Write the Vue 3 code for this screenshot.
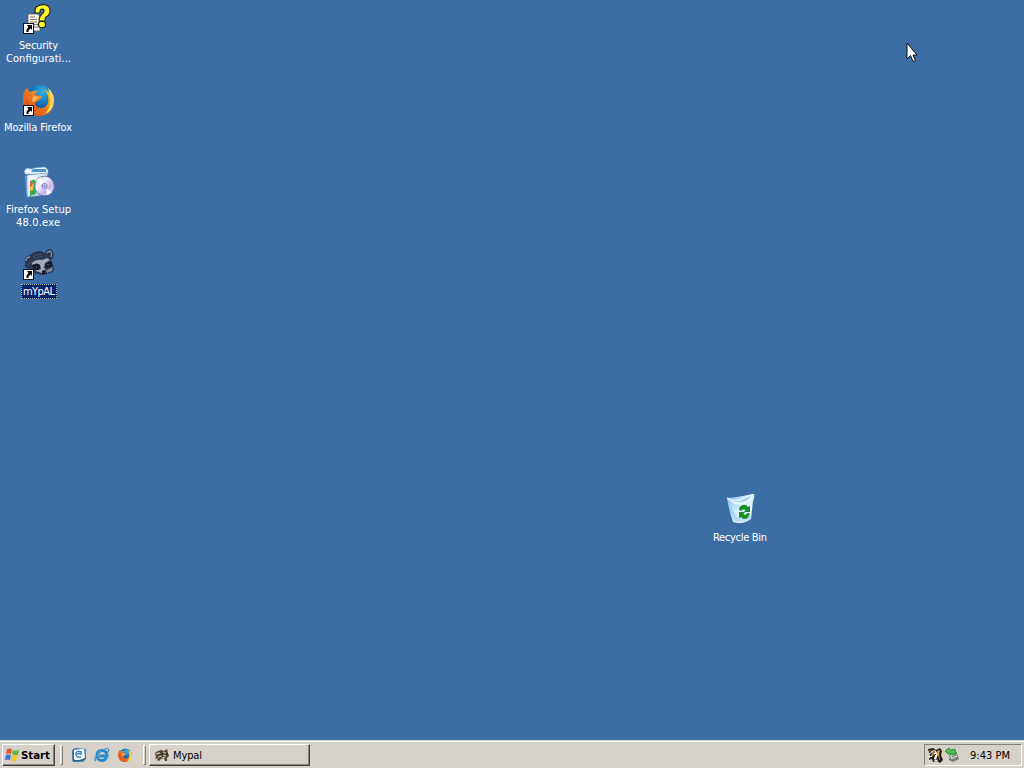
<script setup>
const shortcuts = [
  { id: 'security', x: 23, y: 2, link: true, lines: [{ t: 'Security', w: 39 }, { t: 'Configurati...', w: 65 }] },
  { id: 'firefox', x: 23, y: 84, link: true, lines: [{ t: 'Mozilla Firefox', w: 68 }] },
  { id: 'setup', x: 23, y: 166, link: false, lines: [{ t: 'Firefox Setup', w: 65 }, { t: '48.0.exe', w: 44 }] },
  { id: 'mypal', x: 23, y: 248, link: true, selected: true, lines: [{ t: 'mYpAL', w: 32 }] },
  { id: 'recycle', x: 725, y: 494, link: false, lines: [{ t: 'Recycle Bin', w: 54 }] },
]
</script>

<template>
  <div class="screen">
    <svg class="defs" width="0" height="0" aria-hidden="true">
      <defs>
        <radialGradient id="globe" cx=".6" cy=".25" r=".75">
          <stop offset="0" stop-color="#35b5e4" /><stop offset=".5" stop-color="#1677bd" /><stop offset="1" stop-color="#153d7c" />
        </radialGradient>
        <linearGradient id="fire" x1="0" y1="1" x2="1" y2="0">
          <stop offset="0" stop-color="#d5421c" /><stop offset=".5" stop-color="#e8761f" /><stop offset="1" stop-color="#ffd83c" />
        </linearGradient>
        <linearGradient id="box" x1="0" y1="0" x2="1" y2="1">
          <stop offset="0" stop-color="#ffffff" /><stop offset="1" stop-color="#a3c8ee" />
        </linearGradient>
        <linearGradient id="disc" x1="0" y1="0" x2="1" y2="1">
          <stop offset="0" stop-color="#b7bddf" /><stop offset=".35" stop-color="#f7f4ff" /><stop offset=".65" stop-color="#c6b5e8" /><stop offset="1" stop-color="#f0f0fa" />
        </linearGradient>
        <linearGradient id="bin" x1="0" y1="0" x2="1" y2="1">
          <stop offset="0" stop-color="#74b8ef" /><stop offset=".45" stop-color="#cfeafb" /><stop offset=".75" stop-color="#f4fcff" /><stop offset="1" stop-color="#9dccf0" />
        </linearGradient>
        <symbol id="fox" viewBox="0 0 32 32">
          <circle cx="17" cy="15" r="14" fill="url(#globe)" />
          <path d="M3 4l4 4q4-2 8-1-3 2-3 4l6 1q2 1-2 4l-4 3q0 4 5 5 4 1 7-3 2-3 1-9-1-4-4-7 8 4 9 12 1 10-8 14-9 3-16-2-7-6-6-15 0-6 3-9z" fill="url(#fire)" />
          <path d="M11 12l5 1-4 4-2 1q-2-3 1-6z" fill="#f6b264" />
          <path d="M25 4q7 6 6 14-1 9-9 12 5-6 5-13 0-7-2-13z" fill="#ffd553" />
          <path d="M4 14q0 10 10 13-8-1-11-8z" fill="#dd4b1e" />
        </symbol>
        <symbol id="arrow" viewBox="0 0 11 11">
          <path d="M0 0h11v11H0z" fill="#111" /><path d="M1 1h9v9H1z" fill="#fff" />
          <path d="M4 2h5v5L7.500 5.500 5.500 7.500V9H3.500V6.500L5.500 4z" fill="#000" />
        </symbol>
      </defs>
    </svg>

    <main class="desktop">
      <div v-for="s in shortcuts" :key="s.id" class="shortcut" :style="{ left: s.x - 23 + 'px', top: s.y + 'px' }">
        <svg class="icon" viewBox="0 0 32 32">
          <template v-if="s.id === 'security'">
            <path d="M5 12h10l2 3v14H5z" fill="#f4f1e8" stroke="#555" stroke-width=".7" />
            <path d="M7 15h5M7 17.500h7M7 20h7M10 22.500h5M11 25h4" stroke="#807870" />
            <path d="M12 11V8q0-3 3-4 4-2 8-1 4 1 4 6 0 4-4 6-1 1-1 4h-6q0-4 2-6 3-2 3-4 0-2-2-2-2 0-2 4z" fill="#fff52a" stroke="#25251c" stroke-width="1.200" />
            <path d="M17 19.500h4l1.500 1.500v3L21 25.500h-4L15.500 24v-3z" fill="#fff52a" stroke="#25251c" stroke-width="1.200" />
          </template>
          <use v-else-if="s.id === 'firefox'" href="#fox" />
          <template v-else-if="s.id === 'setup'">
            <path d="M2 8L1 5l3-3 5 1 2-1 11-1 3 3v5z" fill="#eef5fd" stroke="#6c9bcc" stroke-width=".6" />
            <path d="M10 3h13v3H8z" fill="#4c92da" />
            <path d="M2 9l3 2v19l-2-2z" fill="#6ba1dc" />
            <path d="M4 9l20-2v22L4 31z" fill="url(#box)" stroke="#638db8" stroke-width=".7" />
            <path d="M7 15q4-2 5-1l1 14-6 2z" fill="#3aad4b" />
            <path d="M7 15l4 3-1 6-3 1z" fill="#f1bd50" />
            <path d="M7 15l3 2-1 3-2 1z" fill="#d7604c" />
            <circle cx="21.500" cy="20" r="9.800" fill="url(#disc)" stroke="#666c9e" stroke-width=".9" />
            <path d="M20 19L13 15q2-3 5-4zM23 22l6 4q-2 3-5 3z" fill="#fff" opacity=".8" />
            <circle cx="21.500" cy="20" r="2.500" fill="#d7d3ee" stroke="#8379b9" />
            <circle cx="21.500" cy="20" r="1" fill="#6387b5" />
          </template>
          <template v-else-if="s.id === 'mypal'">
            <path d="M2 14q-1-6 5-7 4-4 11-4l4 2q1-4 6-4 4 3 2 9l-2 2q3 5 3 9 0 3-4 4l-6 2-8-1-5-4-6-3z" fill="#2b3550" />
            <path d="M3 13q0-4 4-4M24 5q3-3 4-1 1 2 0 5" stroke="#8790a6" stroke-width="1.300" fill="none" />
            <path d="M10 9q4-3 8-3M11 11l8-3M4 17l6-4" stroke="#46516d" stroke-width="1" fill="none" />
            <path d="M9 15q4-4 10-3l5-2 3 2-5 3-1 5 3 3-3 3-5-2-4-1 6-2-1-4q-4-2-8 1z" fill="#a2a8b8" />
            <path d="M9 17q5-3 8 0l0 4-6 1zM22 16l6-3 1 5-6 2z" fill="#141a2d" />
            <path d="M24 22l6-3-1 4-5 2z" fill="#838a9e" />
            <path d="M19 23q3-2 4 0l-1 3h-3z" fill="#101625" />
            <circle cx="13.500" cy="19" r=".6" fill="#7d879e" /><circle cx="25" cy="16.500" r=".6" fill="#7d879e" />
          </template>
          <template v-else>
            <path d="M2 4q12-1 20-3l7-1q1 4-1 7l-2 18q-8 6-18 3Q4 16 2 4z" fill="url(#bin)" />
            <path d="M2 4l5 3q9 1 15-3l7-4q0 6-9 10Q9 13 2 4z" fill="#e7f7ff" />
            <path d="M5 6q9 2 15-2l7-3q-4 6-10 7Q9 9 5 6z" fill="#a5d5f4" />
            <path d="M4 9q2 12 5 18 8 2 16-2l1-4q-8 4-14 2Q8 17 4 9z" fill="#8bc4ef" opacity=".55" />
            <path d="M2 4q9 5 17 0l10-4" fill="none" stroke="#fff" />
            <path d="M14 16q0-4 4-5 3-1 5 2l2-1v6h-6l1.500-2q-3-2-4 1zM25 19q-1 5-5 6-3 0-4-2l-2 1v-6h6l-1.500 2q2 2 4-1z" fill="#168f25" />
          </template>
          <use v-if="s.link" href="#arrow" x="0" y="21" width="11" height="11" />
        </svg>
        <div class="label" :class="{ selected: s.selected }">
          <svg v-for="l in s.lines" :key="l.t" class="line" :width="l.w" height="13">
            <text x="0" y="10" :textLength="l.w" lengthAdjust="spacing">{{ l.t }}</text>
          </svg>
        </div>
      </div>

      <svg class="cursor" viewBox="0 0 13 21">
        <path d="M1 1v16l3.500-3.500 2.500 6 2.500-1-2.500-5.500H11z" fill="#fff" stroke="#111" />
      </svg>
    </main>

    <footer class="taskbar">
      <button class="start">
        <svg viewBox="0 0 16 16" width="16" height="16">
          <path d="M3 2q3-1 5 0L7 7Q5 6 2 7z" fill="#e5532b" /><path d="M9 3q3 1 6 0l-1 5q-3 1-6-1z" fill="#65b53b" />
          <path d="M2 8q2-1 5 0l-1 5q-2-1-5 0z" fill="#3974d8" /><path d="M8 8q3 1 6 0l-2 6q-3 1-5-1z" fill="#f2c52d" />
        </svg>
        <svg width="30" height="14"><text x="0" y="11" textLength="29" lengthAdjust="spacingAndGlyphs">Start</text></svg>
      </button>
      <i class="grip first"></i>
      <nav class="quick">
        <svg viewBox="0 0 16 16">
          <path d="M1 3l3-2 11 1v10l-3 3H2z" fill="#3e82b2" /><path d="M3 3l10-1 1 9-8 3-3-2z" fill="#f8fcff" />
          <path d="M11 5Q5 3 5 7q0 4 5 3M6 7l4-1v2" fill="none" stroke="#2a7ac0" stroke-width="1.300" />
          <path d="M2 4v10l10-1 2-2" fill="none" stroke="#295775" />
        </svg>
        <svg viewBox="0 0 16 16">
          <path d="M12.500 10.500Q11 13.500 8 13.500 3 13.500 3 8.500T8 3.500q5 0 5 5.500H5" fill="none" stroke="#258bd3" stroke-width="2.800" />
          <path d="M4 7q1-3 4-3" fill="none" stroke="#8fd6f7" />
          <path d="M2 14Q-1 12 5 6q7-6 9-4 2 1-1 4" fill="none" stroke="#3d8fbd" stroke-width="1.200" />
        </svg>
        <svg viewBox="0 0 16 16"><use href="#fox" x="1" y="1" width="14" height="14" /></svg>
      </nav>
      <i class="grip second"></i>
      <button class="task">
        <svg viewBox="0 0 16 16" width="16" height="16">
          <path d="M1 6l3-2 3-1 3 1 3-2 1 4 1 3-2 2v3h-2l-1-3-3 1-2 2-2-1 1-2-3 1 1-2z" fill="#51462f" />
          <path d="M2 7l3-1 2 1M9 5l3 1M9 8l3 1M4 10l4-1M8 11l3-1" stroke="#d3c6a6" fill="none" stroke-width="1.200" />
          <path d="M6 7h3M12 7h2M8 9h1" stroke="#181510" stroke-width="1.200" />
        </svg>
        <svg width="31" height="14"><text x="0" y="11" textLength="29" lengthAdjust="spacing">Mypal</text></svg>
      </button>
      <div class="tray">
        <svg viewBox="0 0 16 16" width="16" height="16">
          <path d="M1 2l5-1 3 2 4-2 2 3-1 4 2 5-3 3-3-2-4 1-1-3-3 1 1-4z" fill="#271c16" />
          <path d="M4 4l4-1 3 4-2 6-2-1 1-4z" fill="#f4eee3" />
          <path d="M10 4l3-1-1 4 1 6-2-1zM5 6l2 2-3 2zM3 3l1 1-2 1z" fill="#ee9a39" />
          <path d="M2 7l3-2M2 10l3-1M7 14l4-1" stroke="#fff" stroke-width="1" />
          <path d="M6 5h2M9 7l-2 2M11 9l1 5" stroke="#171310" />
        </svg>
        <svg viewBox="0 0 16 16" width="16" height="16">
          <path d="M5 7l7-2 2 5-7 3z" fill="#cbd3c6" stroke="#5f6d60" stroke-width=".8" />
          <path d="M5 11l3 2 6-3 1 2-6 3-4-2z" fill="#727e76" /><path d="M8 10l4-2" stroke="#59705a" />
          <path d="M1 4l4-3 1 2 5-1 1 5-5 1-1-2-2 1z" fill="#4abf4e" stroke="#258135" stroke-width=".8" />
        </svg>
        <svg class="clock" width="42" height="14"><text x="0" y="11" textLength="40" lengthAdjust="spacing">9:43 PM</text></svg>
      </div>
    </footer>
  </div>
</template>

<style>
body { margin: 0; overflow: hidden; background: #3c6ea5; }
</style>

<style scoped>
.screen {
  width: 1024px; height: 768px; display: flex; flex-direction: column; overflow: hidden;
  font: 11px "DejaVu Sans Condensed", "DejaVu Sans", sans-serif; cursor: default;
}
.defs { position: absolute; }
.desktop { position: relative; flex: 1; background: #3c6ea5; }
.shortcut { position: absolute; width: 76px; display: flex; flex-direction: column; align-items: center; gap: 4px; }
.icon { width: 32px; height: 32px; display: block; margin-left: 2px; }
.label { display: flex; flex-direction: column; align-items: center; border: 1px solid transparent; padding: 0 1px; }
.label.selected { background: #0a246a; border: 1px dotted #b3b9a8; margin-left: 2px; }
.line { display: block; overflow: visible; }
.line text { fill: #fff; }
.cursor { position: absolute; left: 906px; top: 42px; width: 13px; height: 21px; }
.taskbar {
  box-sizing: border-box; height: 28px; display: flex; align-items: center; padding: 2px;
  background: #d6d2ca; border-top: 1px solid #d6d2ca; box-shadow: inset 0 1px #fff;
}
button {
  box-sizing: border-box; height: 22px; margin: 0; padding: 0; display: flex; align-items: center;
  font: inherit; background: #d6d2ca; border: 1px solid; border-color: #fff #404040 #404040 #fff;
  box-shadow: inset -1px -1px #85817a;
}
.start { width: 53px; gap: 1px; padding-left: 1px; font-family: "DejaVu Sans", sans-serif; font-weight: bold; }
.grip { box-sizing: border-box; width: 3px; height: 20px; border: 1px solid; border-color: #fff #85817a #85817a #fff; }
.first { margin-left: 5px; }
.quick { display: flex; gap: 7px; margin-left: 8px; }
.quick svg { width: 16px; height: 16px; }
.second { margin-left: 10px; }
.task { width: 161px; margin-left: 3px; padding-left: 4px; gap: 3px; }
.tray {
  box-sizing: border-box; width: 98px; height: 22px; margin-left: auto; padding-left: 2px; display: flex; align-items: center; gap: 1px;
  border: 1px solid; border-color: #85817a #fff #fff #85817a;
}
.clock { margin-left: 9px; }
text { fill: #000; }
</style>
